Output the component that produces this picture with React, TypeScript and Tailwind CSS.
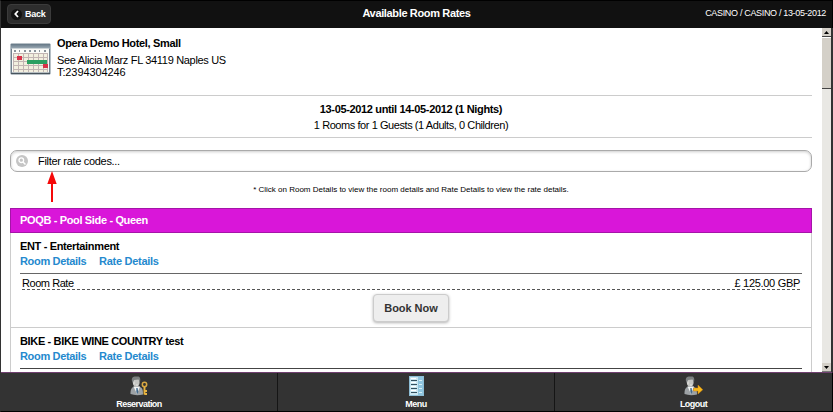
import type { ReactNode } from "react";

function CalendarIcon() {
  return (
    <svg width="41" height="32" viewBox="0 0 41 32" className="shrink-0">
      <defs>
        <linearGradient id="calTop" x1="0" y1="0" x2="0" y2="1">
          <stop offset="0" stopColor="#647785" />
          <stop offset="1" stopColor="#a3b1bb" />
        </linearGradient>
      </defs>
      <rect x="0.5" y="0.5" width="40" height="31" rx="1" fill="#71818d" />
      <rect x="1" y="1" width="39" height="5" fill="url(#calTop)" />
      <rect x="2" y="5.5" width="37" height="24" fill="#fbfbf8" />
      <path d="M4 8h2M9 8h1M14 8h2M19 8h2M24 8h2M29 8h1M34 8h2" stroke="#65717c" strokeWidth="1.4" />
      <rect x="3" y="11" width="35" height="18" fill="#f2efdf" />
      <path d="M3 10.5h35M3 14.5h35M3 18.5h35M3 22.5h35M3 26.5h35M3.5 10v19M8.5 10v19M13.5 10v19M18.5 10v19M23.5 10v19M28.5 10v19M33.5 10v19M37.5 10v19" stroke="#c2b5b3" strokeWidth="1" />
      <rect x="7" y="13" width="5" height="4" fill="#d83249" />
      <rect x="17" y="17" width="20" height="4" fill="#2b9f61" />
      <rect x="33" y="21" width="5" height="4" fill="#d83249" />
      <path d="M1 30.5h39" stroke="#48545d" />
    </svg>
  );
}

function Person({ children }: { children: ReactNode }) {
  return (
    <svg width="19" height="20" viewBox="0 0 19 20">
      <path d="M0.5 18C0.5 14 1 12 4 10.5L9 10.5C12 11.5 13 13 13 18.5Q6 20 0.5 18Z" fill="#9da2a5" />
      <path d="M3.5 10.5L7 18L10 10.5Z" fill="#f1f4f4" />
      <path d="M6.3 12h1.3l0.7 4-1 2-1-2Z" fill="#42698b" />
      <ellipse cx="6.2" cy="6" rx="3.4" ry="4.7" fill="#c4c5c2" />
      <path d="M2 5C1 1 4 0 7 0.5C9.5 0 11 2 10 6L8.5 3.5L4 4L3 7Z" fill="#7b7f80" />
      <path d="M4 5.5v3M6 9h2" stroke="#e5e5e1" />
      {children}
    </svg>
  );
}

function ReservationIcon() {
  return (
    <Person>
      <circle cx="14.5" cy="8.5" r="2.2" fill="none" stroke="#d8a742" strokeWidth="1.5" />
      <path d="M14.5 11v7.5M14.5 15H17M14.5 18H17" stroke="#e8b440" strokeWidth="1.9" />
    </Person>
  );
}

function LogoutIcon() {
  return (
    <Person>
      <path d="M9.5 12h4.5V9l4.8 4.7L14 18v-3H9.5Z" fill="#f8b91c" stroke="#ce8510" strokeWidth="0.5" />
    </Person>
  );
}

function MenuIcon() {
  return (
    <svg width="15" height="20" viewBox="0 0 15 20">
      <rect width="15" height="20" fill="#8dbdd5" />
      <rect x="1" y="1" width="13" height="18" fill="#c9e6f1" />
      <path d="M9 1h5v18H9Z" fill="#8fc5df" />
      <path d="M2 4.5h6M2 8.5h6M2 12.5h6M2 16.5h6" stroke="#34505f" />
      <path d="M2 2.5h5M2 6.5h5M2 10.5h5M2 14.5h5" stroke="#fff" />
      <path d="M10 4.5h3M10 8.5h3M10 12.5h3M10 16.5h3" stroke="#d8f0f7" />
    </svg>
  );
}

function Links() {
  return (
    <div className="flex h-[14px] gap-[13px] text-[11px] leading-[14px] font-bold text-[#2489ce]">
      <a className="w-[66px] whitespace-nowrap tracking-[-0.33px]">Room Details</a>
      <a className="whitespace-nowrap tracking-[-0.28px]">Rate Details</a>
    </div>
  );
}

function Tab({ icon, label, className }: { icon: ReactNode; label: string; className: string }) {
  return (
    <a className={"flex h-full flex-col items-center pt-[3px] " + className}>
      <span className="h-[20px]">{icon}</span>
      <span className="mt-[3px] text-[9px] leading-[10px] font-bold tracking-[-0.55px] text-white">{label}</span>
    </a>
  );
}

export default function App() {
  return (
    <div className="flex h-[412px] w-[833px] flex-col overflow-hidden border-y border-l border-black border-l-[#333] bg-white font-['Liberation_Sans',Arial,sans-serif] text-black">
      <header className="grid h-[27px] shrink-0 grid-cols-[1fr_auto_1fr] border-r border-black bg-[#111] text-white">
        <div className="pt-[3px] pl-[6px]">
          <button className="flex h-[20px] w-[44px] items-center rounded-[4px] border border-[#3b3b3b] bg-[#2d2d2d] pl-[3px]">
            <span className="flex size-[11px] items-center justify-center rounded-full bg-[#121212]">
              <svg width="5" height="8" viewBox="0 0 5 8">
                <path d="M4 1L1.3 4L4 7" fill="none" stroke="#fff" strokeWidth="1.8" />
              </svg>
            </span>
            <span className="ml-[3px] text-[9px] leading-[10px] font-bold tracking-[-0.25px]">Back</span>
          </button>
        </div>
        <h1 className="pt-[5px] text-[11px] leading-[14px] font-bold tracking-[-0.35px]">Available Room Rates</h1>
        <div className="pt-[5px] pr-[6px] text-right text-[9px] leading-[14px] tracking-[-0.33px]">CASINO / CASINO / 13-05-2012</div>
      </header>

      <div className="flex h-[344px] shrink-0">
        <main className="h-full w-[821px] overflow-hidden pr-[10px] pl-[9px]">
          <section className="flex h-[68px] border-b border-[#ccc] pt-[8px]">
            <div className="pt-[7px]">
              <CalendarIcon />
            </div>
            <div className="ml-[6px] text-[11px]">
              <div className="h-[17px] leading-[14px] font-bold tracking-[-0.34px]">Opera Demo Hotel, Small</div>
              <div className="h-[12px] leading-[14px] tracking-[-0.32px]">See Alicia Marz FL 34119 Naples US</div>
              <div className="leading-[14px] tracking-[-0.1px]">T:2394304246</div>
            </div>
          </section>

          <section className="h-[42px] border-b border-[#ccc] pt-[5px] text-center text-[11px]">
            <div className="h-[16px] leading-[16px] font-bold tracking-[-0.35px]">13-05-2012 until 14-05-2012 (1 Nights)</div>
            <div className="h-[16px] leading-[16px] tracking-[-0.43px]">1 Rooms for 1 Guests (1 Adults, 0 Children)</div>
          </section>

          <div className="relative mt-[12px] flex h-[22px] items-center rounded-[7px] border border-[#aaa] pl-[5px] shadow-[inset_0_1px_3px_rgba(0,0,0,0.2)]">
            <svg width="12" height="12" viewBox="0 0 12 12">
              <circle cx="6" cy="6" r="6" fill="#c5c5c5" />
              <circle cx="5.3" cy="5.2" r="2.3" fill="none" stroke="#fff" strokeWidth="1.3" />
              <path d="M7 7l2.5 2.5" stroke="#fff" strokeWidth="1.5" />
            </svg>
            <span className="ml-[10px] text-[11px] leading-[14px] tracking-[-0.31px]">Filter rate codes...</span>
            <svg className="absolute top-[20px] left-[36px]" width="10" height="32" viewBox="0 0 10 32">
              <path d="M5 0L9.7 13H6v18H4V13H0.3Z" fill="#f50909" />
            </svg>
          </div>

          <p className="h-[36px] pt-[12px] text-center text-[8px] leading-[12px]">
            * Click on Room Details to view the room details and Rate Details to view the rate details.
          </p>

          <section>
            <h2 className="h-[25px] border border-[#a514a8] bg-[#d916d9] pl-[9px] text-[11px] leading-[22px] font-bold tracking-[-0.35px] text-white">
              POQB - Pool Side - Queen
            </h2>
            <article className="h-[95px] border-x border-b border-[#ccc] px-[9px] pt-[6px]">
              <h3 className="h-[15px] text-[11px] leading-[15px] font-bold tracking-[-0.35px]">ENT - Entertainment</h3>
              <Links />
              <div className="mt-[5px] border-t border-[#666] px-[2px]">
                <div className="flex h-[16px] justify-between border-b border-dashed border-[#555] text-[11px] leading-[18px]">
                  <span className="tracking-[-0.45px]">Room Rate</span>
                  <span className="tracking-[-0.3px]">£ 125.00 GBP</span>
                </div>
              </div>
              <button className="mx-auto mt-[4px] block h-[28px] w-[76px] rounded-[4px] border border-[#ccc] bg-[#eee] text-[11px] leading-[26px] font-bold tracking-[-0.05px] text-[#333] shadow-[0_1px_3px_rgba(0,0,0,0.3)]">
                Book Now
              </button>
            </article>
            <article className="h-[80px] border-x border-[#ccc] px-[9px] pt-[6px]">
              <h3 className="h-[15px] text-[11px] leading-[15px] font-bold tracking-[-0.35px]">BIKE - BIKE WINE COUNTRY test</h3>
              <Links />
              <div className="mt-[5px] border-t border-[#444]" />
            </article>
          </section>
        </main>

        <aside className="flex h-full w-[9px] flex-col bg-[#e9e8e4]">
          <div className="flex h-[9px] items-center justify-center border-b border-[#444] bg-[#d4d0c8]">
            <svg width="5" height="3" viewBox="0 0 5 3"><path d="M0 3L2.5 0L5 3Z" /></svg>
          </div>
          <div className="h-[52px] border-t border-b border-t-white border-b-[#444] bg-[#d4d0c8]" />
          <div className="mt-auto flex h-[9px] items-center justify-center border-b border-[#777] bg-[#d4d0c8]">
            <svg width="5" height="3" viewBox="0 0 5 3"><path d="M0 0L2.5 3L5 0Z" /></svg>
          </div>
        </aside>
        <div className="w-[2px] bg-[#333]" />
      </div>

      <footer className="flex h-[39px] shrink-0 border-t border-r border-t-[#704070] border-r-black bg-[#333]">
        <Tab className="w-[277px] border-r border-[#151515]" icon={<ReservationIcon />} label="Reservation" />
        <Tab className="w-[277px] border-r border-[#151515]" icon={<MenuIcon />} label="Menu" />
        <Tab className="w-[277px]" icon={<LogoutIcon />} label="Logout" />
      </footer>
    </div>
  );
}
